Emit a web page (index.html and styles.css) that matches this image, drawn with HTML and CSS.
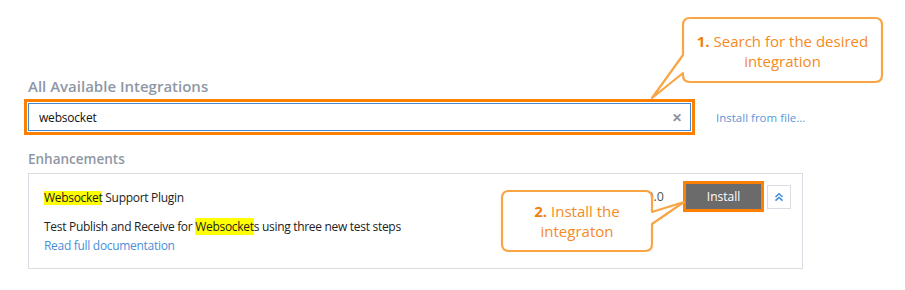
FILE: index.html
```html
<!DOCTYPE html>
<html>
<head>
<meta charset="utf-8">
<link rel="stylesheet" href="styles.css">
</head>
<body>
<div class="page">
  <h2 class="section-title">All Available Integrations</h2>
  <div class="search-row">
    <div class="search-hl">
      <div class="search">
        <span class="query">websocket</span>
        <span class="clear">✕</span>
      </div>
    </div>
    <a class="install-file">Install from file...</a>
  </div>
  <h3 class="sub-title">Enhancements</h3>
  <div class="card">
    <div class="card-head">
      <div class="card-title"><span class="mark">Websocket</span> Support Plugin</div>
      <div class="card-actions">
        <span class="version">1.0.0</span>
        <span class="btn-hl"><button class="btn-install">Install</button></span>
        <button class="btn-collapse">
          <svg width="10" height="10" viewBox="0 0 10 10"><path d="M1.5 5 L5 1.8 L8.5 5 M1.5 8.6 L5 5.4 L8.5 8.6" fill="none" stroke="#3d8ad8" stroke-width="1.5"/></svg>
        </button>
      </div>
    </div>
    <p class="desc">Test Publish and Receive for <span class="mark">Websocket</span>s using three new test steps</p>
    <a class="doc-link">Read full documentation</a>
  </div>

  <div class="callout callout-1">
    <svg class="callout-shape" width="250" height="95" viewBox="0 0 250 95">
      <path d="M50 8 H235 Q242 8 242 15 V65 Q242 72 235 72 H50 Q43 72 43 65 V63 L12 88 L43 45 V15 Q43 8 50 8 Z" fill="#fff" stroke="#f9a445" stroke-width="2.2" stroke-linejoin="round"/>
    </svg>
    <div class="callout-text"><b>1.</b> Search for the desired<br>integration</div>
  </div>

  <div class="callout callout-2">
    <svg class="callout-shape" width="190" height="70" viewBox="0 0 190 70">
      <path d="M9 1 H145 Q152 1 152 8 V22 L184 12 L152 34 V54 Q152 61 145 61 H9 Q2 61 2 54 V8 Q2 1 9 1 Z" fill="#fff" stroke="#f9a445" stroke-width="2.2" stroke-linejoin="round"/>
    </svg>
    <div class="callout-text"><b>2.</b> Install the<br>integraton</div>
  </div>
</div>
</body>
</html>
```
FILE: styles.css
```css
html, body {
  margin: 0;
  padding: 0;
  background: #fff;
}
.page {
  position: relative;
  width: 905px;
  height: 290px;
  padding: 76px 0 0 28px;
  box-sizing: border-box;
  font-family: "Open Sans", "Noto Sans", sans-serif;
  color: #222;
}
.section-title {
  margin: 0 0 3px;
  font-size: 15px;
  line-height: 20px;
  font-weight: 600;
  color: #8e97a6;
}
.search-row {
  display: flex;
  align-items: center;
  margin-left: -4px;
}
.search-hl {
  width: 671px;
  height: 36px;
  box-sizing: border-box;
  border: 3px solid #ff7f00;
  padding: 1px;
}
.search {
  height: 28px;
  box-sizing: border-box;
  border: 1px solid #3d8ad8;
  display: flex;
  align-items: center;
  justify-content: space-between;
  padding: 0 8px 0 10px;
}
.query {
  font-size: 12px;
  letter-spacing: -0.2px;
  color: #111;
}
.clear {
  font-size: 12px;
  font-weight: 700;
  color: #8a8f99;
}
.install-file {
  margin-left: 21px;
  font-size: 11.5px;
  color: #5b97d9;
}
.sub-title {
  margin: 15px 0 5px;
  font-size: 13.5px;
  line-height: 18px;
  font-weight: 600;
  color: #8e97a6;
}
.card {
  width: 775px;
  box-sizing: border-box;
  border: 1px solid #d8dce3;
  padding: 7px 11px 13px 15px;
  font-size: 12px;
  letter-spacing: -0.3px;
}
.card-head {
  display: flex;
  align-items: center;
  justify-content: space-between;
}
.card-title {
  line-height: 14px;
  margin-top: 2px;
}
.mark {
  background: #ffff00;
}
.card-title .mark {
  display: inline-block;
  line-height: 14px;
}
.card-actions {
  display: flex;
  align-items: center;
  letter-spacing: 0;
}
.version {
  font-size: 12.5px;
  color: #555;
  margin-right: 19px;
}
.btn-hl {
  display: block;
  border: 3px solid #ff7f00;
}
.btn-install {
  display: block;
  width: 75px;
  height: 25px;
  margin: 0;
  border: 0;
  background: #6b6b6b;
  color: #fff;
  font-family: inherit;
  font-size: 12px;
  padding: 0;
}
.btn-collapse {
  margin-left: 3px;
  width: 24px;
  height: 24px;
  box-sizing: border-box;
  border: 1px solid #d8dce3;
  background: #fff;
  padding: 0;
  display: flex;
  align-items: center;
  justify-content: center;
}
.desc {
  margin: 5px 0 0;
  line-height: 19px;
}
.doc-link {
  display: block;
  line-height: 19px;
  color: #4a8fd8;
}
.callout {
  position: absolute;
}
.callout-shape {
  position: absolute;
  left: 0;
  top: 0;
}
.callout-text {
  position: relative;
  text-align: center;
  font-size: 15px;
  line-height: 20px;
  color: #f58a1f;
}
.callout-text b {
  font-weight: 700;
  color: #f07f0c;
}
.callout-1 {
  left: 640px;
  top: 10px;
  width: 250px;
  height: 95px;
}
.callout-1 .callout-text {
  position: absolute;
  left: 43px;
  width: 199px;
  top: 21px;
}
.callout-2 {
  left: 500px;
  top: 190px;
  width: 190px;
  height: 70px;
}
.callout-2 .callout-text {
  position: absolute;
  left: 2px;
  width: 150px;
  top: 11px;
}
```
